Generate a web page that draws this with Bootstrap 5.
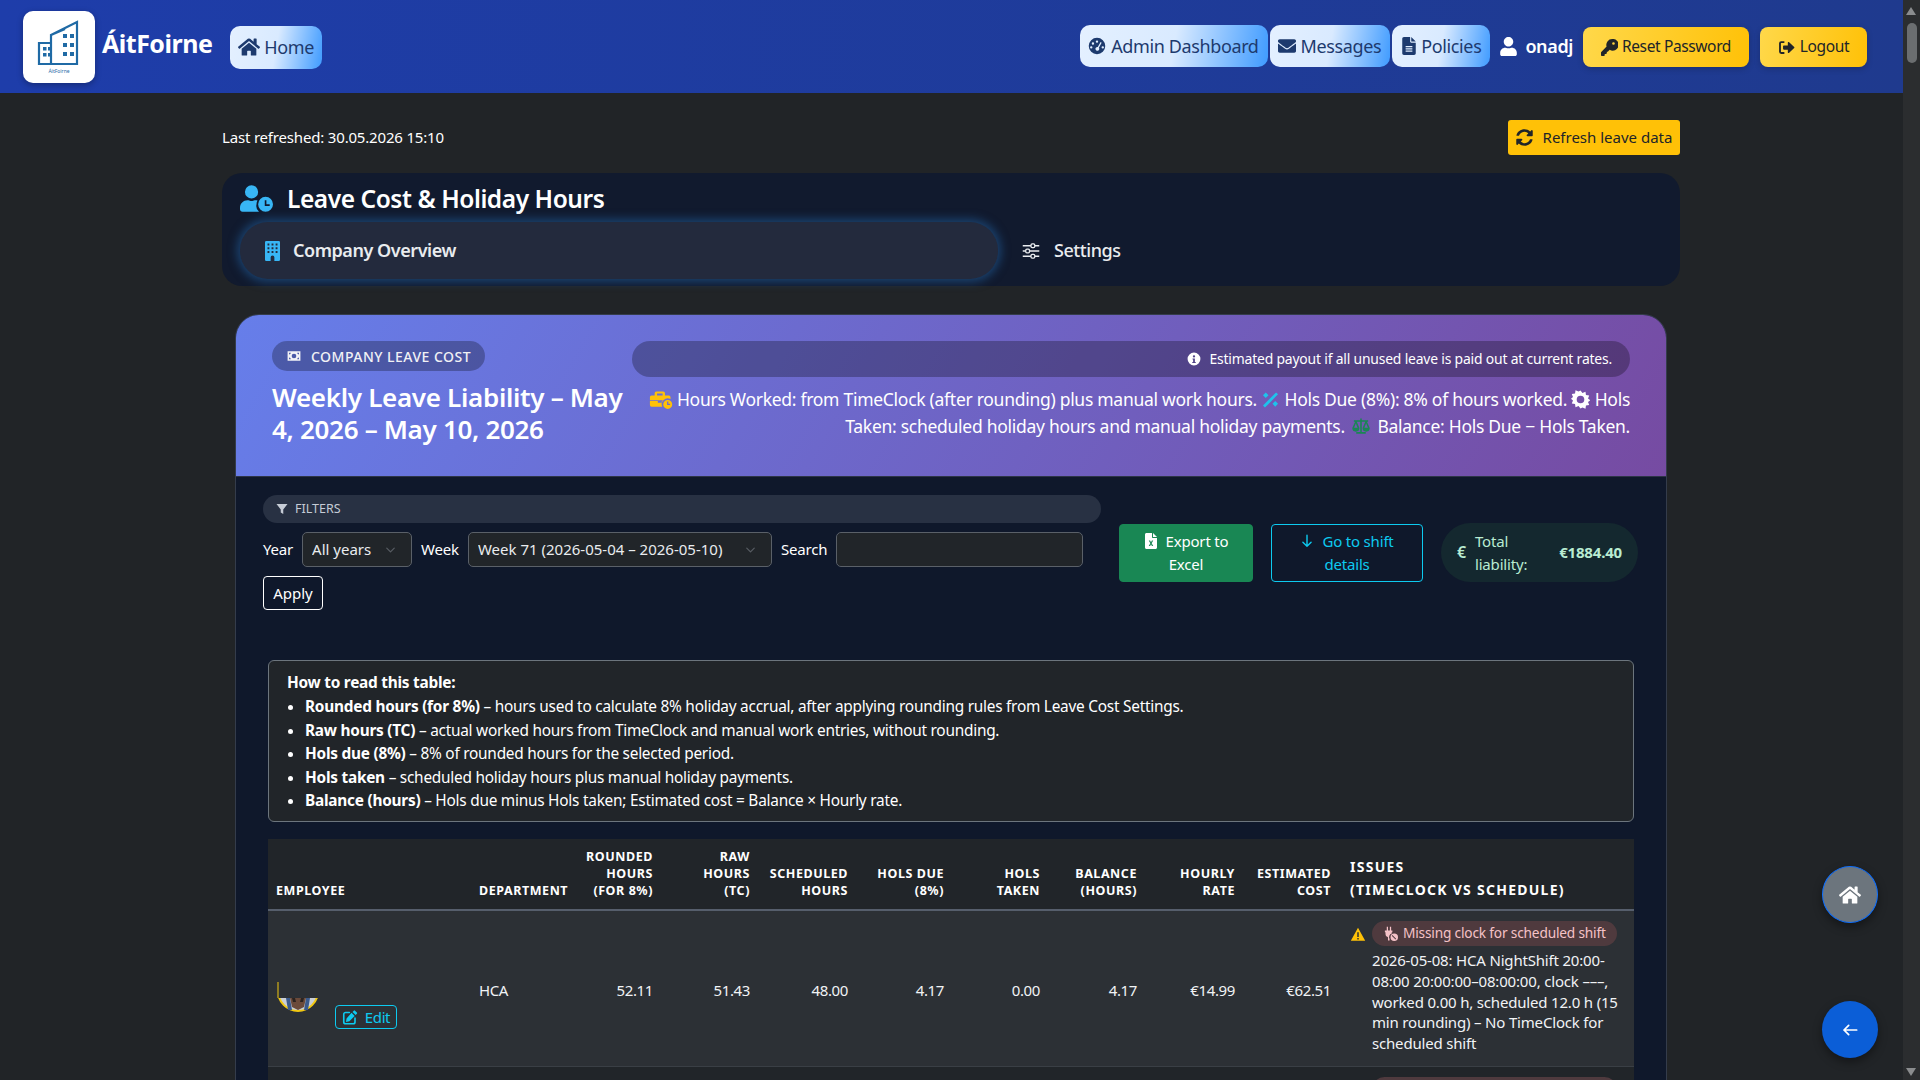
<!DOCTYPE html>
<html lang="en" data-bs-theme="dark">
<head>
  <meta charset="UTF-8" />
  <meta name="viewport" content="width=device-width, initial-scale=1.0" />
  <title>Leave Cost &amp; Holiday Hours - ÁitFoirne</title>
  <link href="https://cdn.jsdelivr.net/npm/bootstrap@5.3.0/dist/css/bootstrap.min.css" rel="stylesheet" />
  <style>
    html, body { height: 100%; overflow: hidden; }
    body {
      background: #212427;
      color: #fff;
      font-family: "Noto Sans", "Liberation Sans", sans-serif;
      font-size: 15px;
      letter-spacing: -0.012em;
    }
    .ico { width: 1em; height: 1em; fill: currentColor; flex: none; }

    .app-shell { height: 100vh; }
    .app-page { flex: 1; min-width: 0; position: relative; overflow: hidden; }

    /* scrollbar drawn by hand, the window has none in the picture */
    .fake-scroll { width: 17px; background: #2b2d2f; position: relative; }
    .fake-thumb { width: 10px; height: 40px; margin: 23px auto 0; background: #6b6e70; border-radius: 5px; }
    .fake-arrow { position: absolute; left: 3px; width: 0; height: 0; border-left: 5.5px solid transparent; border-right: 5.5px solid transparent; }
    .fake-arrow.up { top: 7px; border-bottom: 8px solid #8a8c8e; }
    .fake-arrow.down { bottom: 4px; border-top: 8px solid #8a8c8e; }

    .top-bar { height: 93px; background: linear-gradient(90deg, #1e3daa, #1f3a8e); padding: 0 36px 0 23px; letter-spacing: -0.025em; }
    .logo-box { width: 72px; height: 72px; background: #fff; border-radius: 10px; box-shadow: 0 2px 6px rgba(0,0,0,.3); }
    .logo-box svg { width: 46px; height: 48px; }
    .logo-name { font-size: 5px; color: #1f6aa5; line-height: 6px; letter-spacing: 0; }
    .brand-name { font-size: 25px; font-weight: 700; margin: -6px 0 0 7px; letter-spacing: -0.02em; }
    .nav-grad {
      background: linear-gradient(100deg, #e4f0ff 0%, #d9eaff 50%, #3f9bff 100%);
      color: #1d3a6e; border: 0; border-radius: 10px; font-size: 18px; height: 42px;
      display: inline-flex; align-items: center; gap: 5px; padding: 0 9px 0 8px;
    }
    .nav-grad:hover { color: #1d3a6e; background: linear-gradient(100deg, #e4f0ff 0%, #d9eaff 50%, #3f9bff 100%); }
    .nav-home { width: 92px; height: 43px; margin-left: 18px; margin-top: 1px; padding: 0 8px; gap: 4px; }
    .nav-home .ico { width: 22px; height: 20px; }
    .nav-file { gap: 3px; }
    .user-name { font-size: 18px; font-weight: 600; margin: 0 8px 0 8px; gap: 8px; }
    .user-name .ico { width: 17px; height: 19px; }
    .nav-warn {
      background: linear-gradient(100deg, #ffd84a, #ffc107); color: #212529; border: 0; border-radius: 8px;
      height: 40px; font-size: 15.5px; display: inline-flex; align-items: center; justify-content: center; gap: 4px; padding: 0;
      box-shadow: 0 2px 6px rgba(0,0,0,.2); margin-top: 2px;
    }
    .nav-warn .ico { width: 17px; height: 17px; }
    .warn-reset { width: 166px; }
    .warn-out { width: 107px; margin-left: 9px; gap: 5px; }
    .right-set { gap: 2px; margin-top: -1px; }

    .main-wrap { width: 1458px; margin: 0 0 0 222px; padding-top: 27px; }
    .refresh-btn { background: #ffc107; color: #212529; border: 0; border-radius: 3px; height: 35px; font-size: 15px; width: 172px; gap: 10px; padding: 0; white-space: nowrap; display: inline-flex; align-items: center; justify-content: center; }
    .refresh-btn .ico { width: 17px; height: 17px; }
    .top-line { margin-bottom: 18px; font-size: 15px; }

    .page-panel { height: 113px; background: #111a2e; border-radius: 20px; padding: 10px 18px 9px; margin-bottom: 28px; }
    .panel-title { font-size: 24.5px; font-weight: 600; margin: 0 0 8px; gap: 14px; height: 31px; line-height: 31px; letter-spacing: -0.018em; }
    .panel-title .ico { width: 33px; height: 27px; color: #38b6f5; }
    .tab-row { gap: 23px; }
    .tab-item { height: 57px; display: flex; align-items: center; font-size: 18px; font-weight: 600; color: #e9ecef; letter-spacing: -0.025em; }
    .tab-on { width: 758px; background: #232a3d; border-radius: 28px; padding-left: 25px; gap: 13px; box-shadow: 0 0 10px 3px rgba(35,100,165,.55); }
    .tab-on .ico { width: 15px; height: 20px; color: #38b6f5; }
    .tab-off { gap: 13px; font-weight: 500; }
    .tab-off .ico { width: 20px; height: 18px; }

    .cost-card { margin: 0 13px; background: #0f182b; border: 1px solid #343c4b; border-radius: 24px 24px 0 0; --bs-card-bg: #0f182b; }
    .cost-head { height: 162px; background: linear-gradient(120deg, #667eea, #764ba2); border-radius: 23px 23px 0 0; padding: 26px 36px 0; border-bottom: 1px solid #2d3547; gap: 8px; }
    .head-left { width: 352px; flex: none; }
    .chip-label { display: inline-flex; align-items: center; gap: 9px; height: 30px; padding: 0 14px; border-radius: 15px; background: rgba(0,0,0,.27); font-size: 14px; font-weight: 500; letter-spacing: .035em; color: #f1f1f5; }
    .chip-label .ico { width: 16px; height: 14px; }
    .liab-title { font-size: 26px; font-weight: 600; line-height: 32px; margin: 10px 0 0; letter-spacing: -0.012em; }
    .head-right { flex: 1; min-width: 0; }
    .info-pill { height: 36px; border-radius: 18px; background: rgba(0,0,0,.27); font-size: 13.9px; padding-right: 18px; gap: 9px; }
    .info-pill .ico { width: 14px; height: 14px; }
    .head-note { text-align: right; font-size: 17.5px; line-height: 27px; margin: 9px 0 0; letter-spacing: -0.016em; }
    .head-note .ico { vertical-align: -3px; width: 19px; height: 19px; }
    .head-note .ico.ico-wide { width: 24px; }
    .c-yellow { color: #ffc107; } .c-cyan { color: #1ec3ec; } .c-green { color: #198754; }

    .cost-body { padding: 18px 27px 0; }
    .filter-col { width: 838px; flex: none; }
    .filter-pill { height: 28px; border-radius: 14px; background: #283143; font-size: 12.5px; color: #c6ccd6; gap: 7px; padding-left: 13px; margin-bottom: 9px; letter-spacing: 0; }
    .filter-pill .ico { width: 12px; height: 12px; }
    .filter-form { gap: 9px; font-size: 15px; }
    .sel-fake.form-select, .inp-fake.form-control {
      height: 35px; background-color: #212529; border-color: #5a6068; color: #e9ecef; font-size: 15px; border-radius: 5px; padding: 0 0 0 9px;
    }
    .sel-fake.form-select {
      background-position: right 14px center; background-size: 13px 10px;
      background-image: url("data:image/svg+xml,%3csvg xmlns='http://www.w3.org/2000/svg' viewBox='0 0 16 16'%3e%3cpath fill='none' stroke='%23565b61' stroke-linecap='round' stroke-linejoin='round' stroke-width='2' d='m2 5 6 6 6-6'/%3e%3c/svg%3e");
    }
    .sel-year { width: 110px; } .sel-week { width: 304px; } .inp-search { width: 247px; }
    .apply-btn { height: 34px; width: 60px; border: 1px solid #fff; color: #fff; font-size: 15px; padding: 0; border-radius: 4px; margin-top: 9px; display: block; }
    .action-col { margin: 29px 0 0 18px; gap: 18px; align-items: stretch; }
    .act-btn { font-size: 15px; line-height: 23px; height: 58px; padding: 5px 6px; border-radius: 4px; }
    .act-btn .ico { width: 14px; height: 16px; vertical-align: -2px; margin-right: 8px; }
    .act-export { width: 134px; }
    .act-shift { width: 152px; border-color: #0dcaf0; color: #0dcaf0; }
    .total-pill { width: 197px; height: 59px; margin-top: -1px; border-radius: 30px; background: #14282f; color: #b9ecd2; font-size: 15px; line-height: 23px; padding: 0 16px; gap: 9px; margin-left: 0; }
    .total-pill b { font-weight: 700; margin-left: auto; }
    .total-pill .euro { font-size: 16px; font-weight: 600; }

    .how-box { margin: 50px 5px 17px; height: 162px; background: #212529; border: 1px solid #6c757d; border-radius: 6px; padding: 10px 18px; font-size: 15.4px; line-height: 23.4px; letter-spacing: -0.016em; }
    .how-box ul { margin: 1px 0 0; padding-left: 18px; }
    .how-box b { font-weight: 700; }

    .table-wrap { margin: 0 5px; }
    .leave-tbl { table-layout: fixed; width: 1366px; margin: 0; --bs-table-bg: #212529; }
    .leave-tbl th { font-size: 12.5px; font-weight: 700; line-height: 17px; letter-spacing: .045em; color: #fff; text-transform: uppercase; vertical-align: bottom; padding: 9px 8px 10px; border-bottom: 2px solid #565e6c; }
    .leave-tbl th.th-issues { font-size: 14px; line-height: 23px; letter-spacing: .09em; padding: 9px 8px 8px 11px; }
    .leave-tbl td { vertical-align: middle; padding: 13px 8px 10px; font-size: 15px; color: #f1f3f5; letter-spacing: -0.025em; border-bottom-color: #3a3f45; }
    .leave-tbl td.td-issues { padding: 10px 8px 12px 11px; letter-spacing: -0.012em; }
    .row-alt td { --bs-table-bg: #2c3035; background: #2c3035; }
    .leave-tbl th:nth-child(1) { width: 203px; }
    .leave-tbl th:nth-child(2) { width: 107px; }
    .leave-tbl th:nth-child(3) { width: 83px; }
    .leave-tbl th:nth-child(4) { width: 97px; }
    .leave-tbl th:nth-child(5) { width: 98px; }
    .leave-tbl th:nth-child(6) { width: 96px; }
    .leave-tbl th:nth-child(7) { width: 96px; }
    .leave-tbl th:nth-child(8) { width: 97px; }
    .leave-tbl th:nth-child(9) { width: 98px; }
    .leave-tbl th:nth-child(10) { width: 96px; }
    .emp-cell { padding: 3px 0 0 1px; }
    .avatar-wrap { width: 42px; height: 42px; flex: none; }
    .edit-btn { margin: 35px 0 -17px 16px; width: 62px; height: 24px; padding: 0; font-size: 15px; line-height: 1; border-radius: 4px; border-color: #0dcaf0; color: #0dcaf0; display: inline-flex; align-items: center; justify-content: center; gap: 7px; }
    .edit-btn .ico { width: 16px; height: 15px; }
    .issue-top { gap: 6px; margin-bottom: 4px; }
    .issue-top > .ico { width: 16px; height: 15px; color: #ffc107; margin-top: 6px; }
    .issue-pill { height: 25px; border-radius: 13px; background: #4f3a3e; color: #f5c2c7; font-size: 13.7px; padding: 0 11px; gap: 5px; display: inline-flex; align-items: center; white-space: nowrap; }
    .issue-pill .ico { width: 15px; height: 15px; }
    .issue-text { margin: 0 0 0 22px; font-size: 15px; line-height: 20.8px; }

    .fab { position: absolute; left: 1822px; width: 56px; height: 57px; border-radius: 50%; display: flex; align-items: center; justify-content: center; color: #fff; box-shadow: 0 4px 10px rgba(0,0,0,.4); }
    .fab-home { top: 866px; background: #6c757d; border: 1px solid #0d6efd; }
    .fab-home .ico { width: 22px; height: 20px; }
    .fab-back { top: 1001px; background: #0b5ed7; }
    .fab-back .ico { width: 18px; height: 16px; }
  </style>
</head>
<body>

  <svg width="0" height="0" class="position-absolute">
    <symbol id="i-home" viewBox="0 0 576 512"><path d="M280.37 148.26L96 300.11V464a16 16 0 0 0 16 16l112.06-.29a16 16 0 0 0 15.92-16V368a16 16 0 0 1 16-16h64a16 16 0 0 1 16 16v95.64a16 16 0 0 0 16 16.05L464 480a16 16 0 0 0 16-16V300L295.67 148.26a12.19 12.19 0 0 0-15.3 0zM571.6 251.47L488 182.56V44.05a12 12 0 0 0-12-12h-56a12 12 0 0 0-12 12v72.61L318.47 43a48 48 0 0 0-61 0L4.34 251.47a12 12 0 0 0-1.6 16.9l25.5 31A12 12 0 0 0 45.15 301l235.22-193.74a12.19 12.19 0 0 1 15.3 0L530.9 301a12 12 0 0 0 16.9-1.6l25.5-31a12 12 0 0 0-1.7-16.93z"/></symbol>
    <symbol id="i-mail" viewBox="0 0 512 512"><path d="M502.3 190.8c3.9-3.1 9.7-.2 9.7 4.7V400c0 26.5-21.5 48-48 48H48c-26.5 0-48-21.5-48-48V195.6c0-5 5.7-7.8 9.7-4.7 22.4 17.4 52.1 39.5 154.1 113.6 21.1 15.4 56.7 47.8 92.2 47.6 35.7.3 72-32.8 92.3-47.6 102-74.1 131.6-96.3 154-113.7zM256 320c23.2.4 56.6-29.2 73.4-41.4 132.7-96.3 142.8-104.7 173.4-128.7 5.8-4.5 9.2-11.5 9.2-18.9v-19c0-26.5-21.5-48-48-48H48C21.5 64 0 85.5 0 112v19c0 7.4 3.4 14.3 9.2 18.9 30.6 23.9 40.7 32.4 173.4 128.7 16.8 12.2 50.2 41.8 73.4 41.4z"/></symbol>
    <symbol id="i-user" viewBox="0 0 448 512"><path d="M224 256c70.7 0 128-57.3 128-128S294.7 0 224 0 96 57.3 96 128s57.3 128 128 128zm89.6 32h-16.7c-22.2 10.2-46.9 16-72.9 16s-50.6-5.8-72.9-16h-16.7C60.2 288 0 348.2 0 422.4V464c0 26.5 21.5 48 48 48h352c26.5 0 48-21.5 48-48v-41.6c0-74.2-60.2-134.4-134.4-134.4z"/></symbol>
    <symbol id="i-gauge" viewBox="0 0 24 24"><path fill-rule="evenodd" d="M12 1a11 11 0 1 0 0 22 11 11 0 0 0 0-22zM12 4.500a1.600 1.600 0 1 1 0 3.200 1.600 1.600 0 0 1 0-3.200zM6.600 7a1.600 1.600 0 1 1 0 3.200 1.600 1.600 0 0 1 0-3.200zM4.300 12.200a1.600 1.600 0 1 1 0 3.200 1.600 1.600 0 0 1 0-3.200zM19.700 12.200a1.600 1.600 0 1 1 0 3.200 1.600 1.600 0 0 1 0-3.200zM16.800 6.800l1.400.8-3.700 6.600a2.600 2.600 0 1 1-1.500-.9z"/></symbol>
    <symbol id="i-file" viewBox="0 0 384 512"><path fill-rule="evenodd" d="M224 0H48C21 0 0 21 0 48v416c0 27 21 48 48 48h288c27 0 48-21 48-48V160H256c-18 0-32-14-32-32zM256 0v128h128zM96 256h192v32H96zM96 320h192v32H96zM96 384h192v32H96z"/></symbol>
    <symbol id="i-key" viewBox="0 0 512 512"><path fill-rule="evenodd" d="M336 0a176 176 0 0 0-168 228L8 388a24 24 0 0 0-8 18v82a24 24 0 0 0 24 24h64a24 24 0 0 0 24-24v-40h40a24 24 0 0 0 24-24v-40h28l58-60A176 176 0 1 0 336 0zm40 96a40 40 0 1 1 0 80 40 40 0 0 1 0-80z"/></symbol>
    <symbol id="i-out" viewBox="0 0 512 512"><path d="M192 64H96a64 64 0 0 0-64 64v256a64 64 0 0 0 64 64h96v-56H96a8 8 0 0 1-8-8V128a8 8 0 0 1 8-8h96zM336 96l152 144a24 24 0 0 1 0 32L336 416a24 24 0 0 1-40-18v-78H176a24 24 0 0 1-24-24v-80a24 24 0 0 1 24-24h120v-78a24 24 0 0 1 40-18z"/></symbol>
    <symbol id="i-sync" viewBox="0 0 512 512"><path d="M370 133a168 168 0 0 0-276 62 12 12 0 0 1-11 9H26a12 12 0 0 1-12-14C38 84 138 8 256 8c66 0 126 26 171 68l36-36a24 24 0 0 1 41 17v135a24 24 0 0 1-24 24H345a24 24 0 0 1-17-41zM32 296h135a24 24 0 0 1 17 41l-42 42a168 168 0 0 0 276-62 12 12 0 0 1 11-9h57a12 12 0 0 1 12 14c-24 106-124 182-242 182-66 0-126-26-171-68l-36 36a24 24 0 0 1-41-17V320a24 24 0 0 1 24-24z"/></symbol>
    <symbol id="i-userclock" viewBox="0 0 640 512"><path d="M224 256a128 128 0 1 0 0-256 128 128 0 0 0 0 256zM320 368c0-27 7-53 19-75-12-3-24-5-37-5h-17c-22 10-36 16-61 16s-39-6-61-16h-17C65 288 0 353 0 434v30c0 27 21 48 48 48h321a144 144 0 0 1-49-144z"/><path fill-rule="evenodd" d="M496 224a144 144 0 1 0 0 288 144 144 0 0 0 0-288zm-16 64h32v80h64v32h-96z"/></symbol>
    <symbol id="i-building" viewBox="0 0 384 512"><path fill-rule="evenodd" d="M32 0h320a32 32 0 0 1 32 32v448a32 32 0 0 1-32 32H240v-96a48 48 0 0 0-96 0v96H32a32 32 0 0 1-32-32V32A32 32 0 0 1 32 0zM64 64v48h48V64zM168 64v48h48V64zM272 64v48h48V64zM64 160v48h48v-48zM168 160v48h48v-48zM272 160v48h48v-48zM64 256v48h48v-48zM168 256v48h48v-48zM272 256v48h48v-48z"/></symbol>
    <symbol id="i-sliders" viewBox="0 0 24 24"><path fill="none" stroke="currentColor" stroke-width="1.900" d="M1 5h11M17 5h6M1 12h4M10 12h13M1 19h11M17 19h6"/><rect x="12" y="2.500" width="5" height="5" rx="1.500" fill="none" stroke="currentColor" stroke-width="1.700"/><rect x="5" y="9.500" width="5" height="5" rx="1.500" fill="none" stroke="currentColor" stroke-width="1.700"/><rect x="12" y="16.500" width="5" height="5" rx="1.500" fill="none" stroke="currentColor" stroke-width="1.700"/></symbol>
    <symbol id="i-money" viewBox="0 0 24 24"><path fill-rule="evenodd" d="M1 4h22v16H1zM12 8a4 4 0 1 0 0 8 4 4 0 0 0 0-8zM3.500 6.500v3a3 3 0 0 0 3-3zM17.500 6.500a3 3 0 0 0 3 3v-3zM3.500 14.500v3h3a3 3 0 0 0-3-3zM20.500 14.500a3 3 0 0 0-3 3h3z"/></symbol>
    <symbol id="i-info" viewBox="0 0 24 24"><path fill-rule="evenodd" d="M12 1a11 11 0 1 0 0 22 11 11 0 0 0 0-22zm0 4.500a2 2 0 1 1 0 4 2 2 0 0 1 0-4zM9.500 11h4v6h1.500v2h-6v-2h1.500v-4h-1z"/></symbol>
    <symbol id="i-briefclock" viewBox="0 0 30 24"><path d="M9 2h9a2 2 0 0 1 2 2v3h5a2 2 0 0 1 2 2v2.500a7.500 7.500 0 0 0-10.500 9.500H3a2 2 0 0 1-2-2v-5h10v2h5v-2h1v-1H1V9a2 2 0 0 1 2-2h4V4a2 2 0 0 1 2-2zm1 2.500V7h7V4.500z"/><path fill-rule="evenodd" d="M23.500 12.500a5.700 5.700 0 1 0 0 11.400 5.700 5.700 0 0 0 0-11.400zm-.8 2h1.600v3h2.200v1.600h-3.800z"/></symbol>
    <symbol id="i-percent" viewBox="0 0 24 24"><path d="M19 3l2.500 2.500L5 22l-2.500-2.500z"/><path d="M6 3l3.500 3.500L6 10 2.500 6.500zM18 14l3.500 3.500L18 21l-3.500-3.500z"/></symbol>
    <symbol id="i-sunny" viewBox="0 0 24 24"><path fill-rule="evenodd" d="M12 .5l2.500 3.300 3.800-1.500.6 4.100 4.100.6-1.500 3.800 3 2.200-3 2.200 1.500 3.800-4.100.6-.6 4.100-3.800-1.500L12 23.500l-2.500-3.300-3.800 1.500-.6-4.100-4.100-.6 1.500-3.800-2.500-2.200 2.500-2.200-1.500-3.800 4.100-.6.6-4.100 3.800 1.500zM12 7.200a4.800 4.800 0 1 0 0 9.600 4.800 4.800 0 0 0 0-9.600z"/></symbol>
    <symbol id="i-scale" viewBox="0 0 24 24"><path d="M11 2h2v2h8v2h-1.500l3.500 8a4.500 4.500 0 0 1-9 0l3.300-8H13v13h5v2H6v-2h5V6H6.700L10 14a4.500 4.500 0 0 1-9 0l3.500-8H3V4h8zM5.500 8.300L3.300 13.500h4.400zM18.500 8.300l-2.200 5.200h4.400z"/></symbol>
    <symbol id="i-filter" viewBox="0 0 24 24"><path d="M1 2h22L14.500 13v9l-5-3v-6z"/></symbol>
    <symbol id="i-excel" viewBox="0 0 384 512"><path fill-rule="evenodd" d="M224 0H48C21 0 0 21 0 48v416c0 27 21 48 48 48h288c27 0 48-21 48-48V160H256c-18 0-32-14-32-32zM256 0v128h128zM120 240h44l28 54 28-54h44l-50 88 50 88h-44l-28-54-28 54h-44l50-88z"/></symbol>
    <symbol id="i-down" viewBox="0 0 24 24"><path fill="none" stroke="currentColor" stroke-width="2.400" stroke-linecap="round" stroke-linejoin="round" d="M12 2v19M5 14l7 7 7-7"/></symbol>
    <symbol id="i-left" viewBox="0 0 24 24"><path fill="none" stroke="currentColor" stroke-width="2.600" stroke-linecap="round" stroke-linejoin="round" d="M22 12H3M10 5l-7 7 7 7"/></symbol>
    <symbol id="i-pen" viewBox="0 0 24 24"><path fill="none" stroke="currentColor" stroke-width="2.600" stroke-linecap="round" d="M11 4H5a3 3 0 0 0-3 3v12a3 3 0 0 0 3 3h12a3 3 0 0 0 3-3v-6"/><path d="M20 1l3 3a1.500 1.500 0 0 1 0 2l-2 2-5-5 2-2a1.500 1.500 0 0 1 2 0zM14.500 4.500l5 5L11 18l-5.500 1 1-5.500z"/></symbol>
    <symbol id="i-plug" viewBox="0 0 24 24"><path d="M6 1h2v6h3V1h2v6h2v3h-1v2a6 6 0 0 0-3.500 8.800V23H8v-5a5 5 0 0 1-4-5v-3H3V7h3z"/><path fill-rule="evenodd" d="M18 12a6 6 0 1 0 0 12 6 6 0 0 0 0-12zm-3 2.500l6 6-1 1-6-6z"/></symbol>
    <symbol id="i-warn" viewBox="0 0 24 24"><path fill-rule="evenodd" d="M12 1L.5 22h23zM10.800 8.500h2.400v7.500h-2.400zM10.800 17.500h2.400v2.400h-2.400z"/></symbol>
  </svg>

  <div class="app-shell d-flex">
    <div class="app-page">

      <nav class="top-bar d-flex align-items-center">
        <div class="logo-box d-flex flex-column align-items-center justify-content-center">
          <svg viewBox="0 0 46 48" fill="none" stroke="#1f6aa5" stroke-width="2.200">
            <path d="M15 15 L41 2 V44 H3 V23 H15 Z M15 23 V44 M15 15 L29 9" />
            <g fill="#1f6aa5" stroke="none">
              <rect x="7" y="27" width="3.500" height="3.500"/><rect x="12" y="27" width="3.500" height="3.500"/>
              <rect x="7" y="33" width="3.500" height="3.500"/><rect x="12" y="33" width="3.500" height="3.500"/>
              <rect x="27" y="14" width="4" height="4"/><rect x="34" y="14" width="4" height="4"/>
              <rect x="27" y="23" width="4" height="4"/><rect x="34" y="23" width="4" height="4"/>
              <rect x="27" y="32" width="4" height="4"/><rect x="34" y="32" width="4" height="4"/>
            </g>
          </svg>
          <span class="logo-name">ÁitFoirne</span>
        </div>
        <span class="brand-name">ÁitFoirne</span>
        <a class="btn nav-grad nav-home" href="#"><svg class="ico"><use href="#i-home"/></svg>Home</a>

        <div class="right-set ms-auto d-flex align-items-center">
          <a class="btn nav-grad" href="#"><svg class="ico"><use href="#i-gauge"/></svg>Admin Dashboard</a>
          <a class="btn nav-grad" href="#"><svg class="ico"><use href="#i-mail"/></svg>Messages</a>
          <a class="btn nav-grad nav-file" href="#"><svg class="ico"><use href="#i-file"/></svg>Policies</a>
          <span class="user-name d-inline-flex align-items-center"><svg class="ico"><use href="#i-user"/></svg>onadj</span>
          <a class="btn nav-warn warn-reset" href="#"><svg class="ico"><use href="#i-key"/></svg>Reset Password</a>
          <a class="btn nav-warn warn-out" href="#"><svg class="ico"><use href="#i-out"/></svg>Logout</a>
        </div>
      </nav>

      <main class="main-wrap">
        <div class="top-line d-flex justify-content-between align-items-center">
          <span>Last refreshed: 30.05.2026 15:10</span>
          <button class="btn refresh-btn" type="button"><svg class="ico"><use href="#i-sync"/></svg>Refresh leave data</button>
        </div>

        <section class="page-panel">
          <h1 class="panel-title d-flex align-items-center"><svg class="ico"><use href="#i-userclock"/></svg>Leave Cost &amp; Holiday Hours</h1>
          <div class="tab-row d-flex">
            <a class="tab-item tab-on text-decoration-none" href="#"><svg class="ico"><use href="#i-building"/></svg>Company Overview</a>
            <a class="tab-item tab-off text-decoration-none" href="#"><svg class="ico"><use href="#i-sliders"/></svg>Settings</a>
          </div>
        </section>

        <section class="card cost-card">
          <header class="cost-head d-flex">
            <div class="head-left">
              <span class="chip-label"><svg class="ico"><use href="#i-money"/></svg>COMPANY LEAVE COST</span>
              <h2 class="liab-title">Weekly Leave Liability – May 4, 2026 – May 10, 2026</h2>
            </div>
            <div class="head-right">
              <div class="info-pill d-flex align-items-center justify-content-end"><svg class="ico"><use href="#i-info"/></svg>Estimated payout if all unused leave is paid out at current rates.</div>
              <p class="head-note">
                <svg class="ico ico-wide c-yellow"><use href="#i-briefclock"/></svg> Hours Worked: from TimeClock (after rounding) plus manual work hours.
                <svg class="ico c-cyan"><use href="#i-percent"/></svg> Hols Due (8%): 8% of hours worked.
                <svg class="ico"><use href="#i-sunny"/></svg> Hols Taken: scheduled holiday hours and manual holiday payments.
                <svg class="ico ico-wide c-green"><use href="#i-scale"/></svg> Balance: Hols Due − Hols Taken.
              </p>
            </div>
          </header>

          <div class="cost-body">
            <div class="d-flex">
              <form class="filter-col">
                <div class="filter-pill d-flex align-items-center"><svg class="ico"><use href="#i-filter"/></svg>FILTERS</div>
                <div class="filter-form d-flex align-items-center">
                  <label>Year</label>
                  <select class="form-select sel-fake sel-year"><option>All years</option></select>
                  <label>Week</label>
                  <select class="form-select sel-fake sel-week"><option>Week 71 (2026-05-04 – 2026-05-10)</option></select>
                  <label>Search</label>
                  <input class="form-control inp-fake inp-search" type="text" />
                </div>
                <button class="btn apply-btn" type="button">Apply</button>
              </form>
              <div class="action-col d-flex">
                <a class="btn btn-success act-btn act-export" href="#"><svg class="ico"><use href="#i-excel"/></svg>Export to Excel</a>
                <a class="btn btn-outline-info act-btn act-shift" href="#"><svg class="ico"><use href="#i-down"/></svg>Go to shift details</a>
                <div class="total-pill d-flex align-items-center">
                  <span class="euro">€</span><span>Total liability:</span><b>€1884.40</b>
                </div>
              </div>
            </div>

            <div class="how-box">
              <b>How to read this table:</b>
              <ul>
                <li><b>Rounded hours (for 8%)</b> – hours used to calculate 8% holiday accrual, after applying rounding rules from Leave Cost Settings.</li>
                <li><b>Raw hours (TC)</b> – actual worked hours from TimeClock and manual work entries, without rounding.</li>
                <li><b>Hols due (8%)</b> – 8% of rounded hours for the selected period.</li>
                <li><b>Hols taken</b> – scheduled holiday hours plus manual holiday payments.</li>
                <li><b>Balance (hours)</b> – Hols due minus Hols taken; Estimated cost = Balance × Hourly rate.</li>
              </ul>
            </div>

            <div class="table-wrap">
              <table class="table leave-tbl">
                <thead>
                  <tr>
                    <th>Employee</th>
                    <th>Department</th>
                    <th class="text-end">Rounded<br />hours<br />(for 8%)</th>
                    <th class="text-end">Raw<br />hours<br />(TC)</th>
                    <th class="text-end">Scheduled hours</th>
                    <th class="text-end">Hols due (8%)</th>
                    <th class="text-end">Hols taken</th>
                    <th class="text-end">Balance (hours)</th>
                    <th class="text-end">Hourly rate</th>
                    <th class="text-end">Estimated cost</th>
                    <th class="th-issues">Issues<br />(TimeClock vs Schedule)</th>
                  </tr>
                </thead>
                <tbody>
                  <tr class="row-alt">
                    <td>
                      <div class="emp-cell d-flex">
                        <svg class="avatar-wrap" viewBox="0 0 42 42">
                          <defs><clipPath id="av-clip"><path d="M0 28H42V42H0z"/></clipPath></defs>
                          <g clip-path="url(#av-clip)">
                            <circle cx="21" cy="21" r="20" fill="#c9ced6" stroke="#f2c811" stroke-width="2"/>
                            <path d="M9 28h4l2 12H11zM33 28h-4l-2 12h4z" fill="#3a5a8c"/>
                            <path d="M13 28h16l-2 9-6 3-6-3z" fill="#6b4a3a"/>
                            <path d="M15 28h3l1 4h-3zM27 28h-3l-1 4h3z" fill="#2b2320"/>
                          </g>
                          <path d="M1 12v16" stroke="#f2c811" stroke-width="1"/>
                        </svg>
                        <a class="btn edit-btn" href="#"><svg class="ico"><use href="#i-pen"/></svg>Edit</a>
                      </div>
                    </td>
                    <td>HCA</td>
                    <td class="text-end">52.11</td>
                    <td class="text-end">51.43</td>
                    <td class="text-end">48.00</td>
                    <td class="text-end">4.17</td>
                    <td class="text-end">0.00</td>
                    <td class="text-end">4.17</td>
                    <td class="text-end">€14.99</td>
                    <td class="text-end">€62.51</td>
                    <td class="td-issues">
                      <div class="issue-top d-flex align-items-start">
                        <svg class="ico"><use href="#i-warn"/></svg>
                        <span class="issue-pill"><svg class="ico"><use href="#i-plug"/></svg>Missing clock for scheduled shift</span>
                      </div>
                      <p class="issue-text">2026-05-08: HCA NightShift 20:00-08:00 20:00:00–08:00:00, clock –––, worked 0.00 h, scheduled 12.0 h (15 min rounding) – No TimeClock for scheduled shift</p>
                    </td>
                  </tr>
                  <tr>
                    <td></td><td></td><td></td><td></td><td></td><td></td><td></td><td></td><td></td><td></td>
                    <td class="td-issues">
                      <div class="issue-top d-flex align-items-start">
                        <svg class="ico"><use href="#i-warn"/></svg>
                        <span class="issue-pill"><svg class="ico"><use href="#i-plug"/></svg>Missing clock for scheduled shift</span>
                      </div>
                    </td>
                  </tr>
                </tbody>
              </table>
            </div>
          </div>
        </section>
      </main>

      <a class="fab fab-home" href="#"><svg class="ico"><use href="#i-home"/></svg></a>
      <a class="fab fab-back" href="#"><svg class="ico"><use href="#i-left"/></svg></a>
    </div>

    <div class="fake-scroll">
      <div class="fake-arrow up"></div>
      <div class="fake-thumb"></div>
      <div class="fake-arrow down"></div>
    </div>
  </div>

  <script src="https://cdn.jsdelivr.net/npm/bootstrap@5.3.0/dist/js/bootstrap.bundle.min.js"></script>
</body>
</html>
